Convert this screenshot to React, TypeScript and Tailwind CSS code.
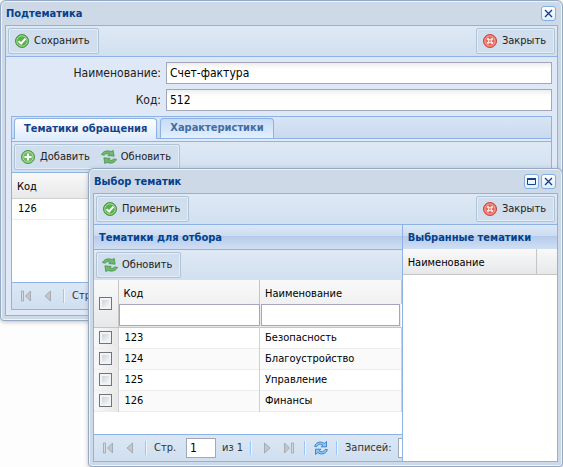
import type { ReactNode } from "react";

const FONT = "font-['DejaVu_Sans_Condensed','DejaVu_Sans',sans-serif] [font-stretch:condensed]";

function CheckIcon() {
  return (
    <svg width="16" height="16" viewBox="0 0 16 16" aria-hidden="true">
      <circle cx="8" cy="8" r="6.5" fill="#58b04a" stroke="#4a9444" />
      <circle cx="8" cy="8" r="5.2" fill="none" stroke="#a9d8a0" />
      <path d="M4.6 8.2 7.1 10.5 11.5 5.6" fill="none" stroke="#fff" strokeWidth="2.1" />
    </svg>
  );
}

function AddIcon() {
  return (
    <svg width="16" height="16" viewBox="0 0 16 16" aria-hidden="true">
      <circle cx="8" cy="8" r="6.5" fill="#6cbb5f" stroke="#4a9444" />
      <circle cx="8" cy="8" r="5.2" fill="none" stroke="#b0dca8" />
      <path d="M8 4.5v7M4.5 8h7" stroke="#fff" strokeWidth="2" />
    </svg>
  );
}

function CancelIcon() {
  return (
    <svg width="16" height="16" viewBox="0 0 16 16" aria-hidden="true">
      <circle cx="8" cy="8" r="6.5" fill="#e56457" stroke="#c9473d" />
      <circle cx="8" cy="8" r="5.1" fill="none" stroke="#f3a79e" />
      <path d="M5.2 5.2l5.6 5.6M10.8 5.2l-5.6 5.6" stroke="#fde3df" strokeWidth="2.2" />
      <circle cx="8" cy="8" r="1" fill="#ea7d72" />
    </svg>
  );
}

function RefreshIcon() {
  return (
    <svg width="16" height="16" viewBox="0 0 16 16" aria-hidden="true">
      <g fill="#6dba6c" stroke="#3d8a48" strokeWidth=".7" strokeLinejoin="round">
        <path d="M.5 5.6C2 2.2 6 .9 10 2.6l2.2-1.2.9 5.8-6.3-.6 1.7-1.3C6.2 4.4 4.3 4.6 3.2 6.2Z" />
        <path d="M15.5 10.4c-1.5 3.4-5.5 4.7-9.5 3l-2.2 1.2-.9-5.8 6.3.6-1.7 1.3c2.3.9 4.2.7 5.3-.9Z" />
      </g>
    </svg>
  );
}

function ReloadIcon() {
  return (
    <svg width="16" height="16" viewBox="0 0 16 16" aria-hidden="true">
      <g fill="#8cc9f8" stroke="#2370c4" strokeWidth=".8" strokeLinejoin="round">
        <path d="M1.6 6.4C2.6 2.8 6.4 1 10 2.7l1.2.8 2.3-2v5.3H8.1l1.6-1.7C7.4 3.6 5 4.2 3.8 6.6Z" />
        <path d="M14.4 9.6c-1 3.6-4.8 5.4-8.4 3.7l-1.2-.8-2.3 2V9.2h5.4l-1.6 1.7c2.3 1.5 4.7.9 5.9-1.5Z" />
      </g>
    </svg>
  );
}

function ArrowIcon({ flip = false, bar = false }: { flip?: boolean; bar?: boolean }) {
  return (
    <svg width="16" height="16" viewBox="0 0 16 16" aria-hidden="true" className={flip ? "-scale-x-100" : ""}>
      {bar && <path d="M3.5 3v10h2V3Z" fill="#d7dade" stroke="#9ca1a7" strokeWidth=".8" />}
      <path
        d={bar ? "M12.5 3v10L7.5 8Z" : "M10.5 3v10L5 8Z"}
        fill="#c3c7cc"
        stroke="#9ca1a7"
        strokeWidth=".8"
      />
    </svg>
  );
}

function ToolButton({ label, icon }: { label: string; icon: ReactNode }) {
  return (
    <button type="button" className="flex h-5 items-center gap-1 pr-[7px] pl-1 text-[11px] text-[#222]">
      {icon}
      {label}
    </button>
  );
}

function ButtonGroup({ children }: { children: ReactNode }) {
  return (
    <div className="flex h-[26px] items-center rounded-xs border border-[#afc3d6] bg-[#d0deee] px-px shadow-[inset_0_0_0_1px_#e3edf7]">
      {children}
    </div>
  );
}

function Toolbar({ children }: { children: ReactNode }) {
  return (
    <div className="flex h-[30px] items-center justify-between bg-linear-to-b from-[#dfe9f5] to-[#d1e0ef] px-0.5">
      {children}
    </div>
  );
}

function TitleTool({ label, children }: { label: string; children: ReactNode }) {
  return (
    <button
      type="button"
      aria-label={label}
      className="grid size-[15px] place-items-center rounded-[3px] border border-[#84aee3] bg-linear-to-b from-white to-[#dcefff]"
    >
      {children}
    </button>
  );
}

function Window({ title, maximizable = false, children }: { title: string; maximizable?: boolean; children: ReactNode }) {
  return (
    <section className="rounded-md rounded-b-sm border border-[#95a9c4] bg-[#cdd9e7] px-1 pb-1 shadow-[inset_0_0_0_1px_#edf3fa,0_1px_4px_#8888]">
      <header className="flex h-6 items-center justify-between pr-0.5 pl-px">
        <h2 className="pt-0.5 text-[11px] font-bold text-[#04408c]">{title}</h2>
        <div className="flex gap-0.5">
          {maximizable && (
            <TitleTool label="Развернуть">
              <svg width="9" height="7" viewBox="0 0 9 7" aria-hidden="true">
                <path d="M.5 1v5.5h8V1" fill="none" stroke="#15428b" />
                <path d="M0 1h9" stroke="#15428b" strokeWidth="2" />
              </svg>
            </TitleTool>
          )}
          <TitleTool label="Закрыть окно">
            <svg width="9" height="9" viewBox="0 0 9 9" aria-hidden="true">
              <path d="M1 1l7 7M8 1l-7 7" stroke="#173a91" strokeWidth="1.3" />
            </svg>
          </TitleTool>
        </div>
      </header>
      <div className="border border-[#8db2e3]">{children}</div>
    </section>
  );
}

function Field({ id, label, value }: { id: string; label: string; value: string }) {
  return (
    <div className="flex items-center gap-[5px]">
      <label htmlFor={id} className="w-[150px] text-right text-[12px] text-[#222]">
        {label}
      </label>
      <input
        id={id}
        defaultValue={value}
        className="h-[22px] min-w-0 flex-1 border border-[#a3a8b8] bg-white bg-linear-to-b from-[#eceeee] to-white to-30% px-[3px] text-[12px] text-black"
      />
    </div>
  );
}

function Separator() {
  return <span className="mx-px h-3.5 w-0.5 shrink-0 border-r border-l border-r-[#eef5fc] border-l-[#98c8ff]" />;
}

function PagerButton({ label, children }: { label: string; children: ReactNode }) {
  return (
    <button type="button" aria-label={label} className="grid size-4 shrink-0 place-items-center">
      {children}
    </button>
  );
}

function Pager({ id, sizable = false }: { id: string; sizable?: boolean }) {
  return (
    <div className="flex h-[27px] items-center gap-1.5 overflow-hidden border-t border-[#8db2e3] bg-linear-to-b from-[#dbe7f4] to-[#cfdff0] pl-1.5 text-[11px] whitespace-nowrap text-[#333]">
      <PagerButton label="Первая страница"><ArrowIcon bar /></PagerButton>
      <PagerButton label="Предыдущая страница"><ArrowIcon /></PagerButton>
      <Separator />
      <label htmlFor={id + "-page"} className="w-[26px] shrink-0">Стр.</label>
      <input id={id + "-page"} defaultValue="1" className="h-5 w-[30px] shrink-0 border border-[#a3a8b8] bg-white px-[3px] text-[12px] text-black" />
      <span className="w-[21px] shrink-0">из 1</span>
      <Separator />
      <PagerButton label="Следующая страница"><ArrowIcon flip /></PagerButton>
      <PagerButton label="Последняя страница"><ArrowIcon flip bar /></PagerButton>
      <Separator />
      <PagerButton label="Обновить список"><ReloadIcon /></PagerButton>
      {sizable && (
        <>
          <Separator />
          <label htmlFor={id + "-size"} className="shrink-0">Записей:</label>
          <input id={id + "-size"} className="h-5 w-[60px] shrink-0 border border-[#a3a8b8] bg-white" />
        </>
      )}
    </div>
  );
}

function PanelTitle({ children }: { children: ReactNode }) {
  return (
    <h3 className="h-6 truncate bg-[linear-gradient(#dce8f7,#ccdcf1_45%,#afc9ea_46%,#b8cdec_52%,#cfdef3)] px-[5px] pt-px text-[11px] leading-6 font-bold text-[#04408c]">
      {children}
    </h3>
  );
}

function Tick({ label }: { label: string }) {
  return (
    <input
      type="checkbox"
      aria-label={label}
      className="mx-auto block size-[13px] appearance-none border border-[#70757b] bg-linear-to-br from-[#c5cad0] to-white shadow-[inset_0_0_0_2px_#f2f3f4]"
    />
  );
}

const topics = [
  ["123", "Безопасность"],
  ["124", "Благоустройство"],
  ["125", "Управление"],
  ["126", "Финансы"],
];

const HEAD = "bg-linear-to-b from-[#f9f9f9] to-[#e7e8ea]";

function TopicPicker() {
  return (
    <Window title="Выбор тематик" maximizable>
      <Toolbar>
        <ButtonGroup><ToolButton label="Применить" icon={<CheckIcon />} /></ButtonGroup>
        <ButtonGroup><ToolButton label="Закрыть" icon={<CancelIcon />} /></ButtonGroup>
      </Toolbar>
      <div className="grid grid-cols-[minmax(0,2fr)_minmax(0,1fr)] border-t border-[#8db2e3] bg-white">
        <div className="border-r border-[#8db2e3]">
          <PanelTitle>Тематики для отбора</PanelTitle>
          <div className="border-t border-[#8db2e3]">
            <Toolbar>
              <ButtonGroup><ToolButton label="Обновить" icon={<RefreshIcon />} /></ButtonGroup>
            </Toolbar>
          </div>
          <div className="min-h-[154px]">
            <table className="w-full table-fixed border-collapse text-left text-[11px] text-black">
              <colgroup>
                <col className="w-6" />
                <col />
                <col />
              </colgroup>
              <thead className={HEAD}>
                <tr className="h-6">
                  <th rowSpan={2} className="border-r border-b border-[#c5c5c5] p-0"><Tick label="Выбрать все" /></th>
                  <th className="border-r border-[#c5c5c5] px-[5px] pt-1 pb-0 font-normal">Код</th>
                  <th className="border-r border-[#c5c5c5] px-[5px] pt-1 pb-0 font-normal">Наименование</th>
                </tr>
                <tr className="h-[23px] border-b border-[#c5c5c5]">
                  <th className="p-0"><input aria-label="Фильтр по коду" className="block h-[22px] w-full border border-[#a5a5bd] bg-white px-1 font-normal" /></th>
                  <th className="py-0 pr-px pl-px"><input aria-label="Фильтр по наименованию" className="block h-[22px] w-full border border-[#a5a5bd] bg-white px-1 font-normal" /></th>
                </tr>
              </thead>
              <tbody>
                {topics.map(([code, name]) => (
                  <tr key={code} className="h-[21px] border-b border-[#ededed] even:bg-[#fafafa]">
                    <td className="border-r border-[#d0d0d0] bg-linear-to-r from-[#f8f8f8] to-[#e8e8e9] p-0"><Tick label={name} /></td>
                    <td className="border-r border-[#d0d0d0] px-1.5 pt-0.5 pb-0">{code}</td>
                    <td className="border-r border-[#d0d0d0] px-[5px] pt-0.5 pb-0">{name}</td>
                  </tr>
                ))}
              </tbody>
            </table>
          </div>
          <Pager id="picker" sizable />
        </div>
        <div>
          <PanelTitle>Выбранные тематики</PanelTitle>
          <table className="w-full table-fixed border-collapse text-left text-[11px] text-black">
            <thead className={HEAD}>
              <tr className="h-[25px] border-b border-[#c5c5c5]">
                <th className="border-r border-[#c5c5c5] px-[5px] pt-1 pb-0 font-normal">Наименование</th>
                <td className="w-5 p-0" />
              </tr>
            </thead>
          </table>
        </div>
      </div>
    </Window>
  );
}

export default function App() {
  return (
    <main className={`relative min-h-screen bg-[#fdfdfd] ${FONT}`}>
      <Window title="Подтематика">
        <Toolbar>
          <ButtonGroup><ToolButton label="Сохранить" icon={<CheckIcon />} /></ButtonGroup>
          <ButtonGroup><ToolButton label="Закрыть" icon={<CancelIcon />} /></ButtonGroup>
        </Toolbar>
        <div className="border-t border-[#8db2e3] bg-[#dfe8f6] p-[5px]">
          <div className="flex flex-col gap-[5px]">
            <Field id="name" label="Наименование:" value="Счет-фактура" />
            <Field id="code" label="Код:" value="512" />
          </div>
          <div className="mt-[5px] border border-[#8db2e3]">
            <div role="tablist" className="flex h-[22px] items-end gap-[3px] border-b border-[#8db2e3] bg-linear-to-b from-[#d9e5f5] to-[#c9d9ee] px-0.5 text-[11px] font-bold">
              <button type="button" role="tab" aria-selected="true" className="-mb-px h-[21px] rounded-t border border-b-0 border-[#8db2e3] bg-linear-to-b from-white to-[#deecfd] px-[9px] text-[#15428b]">
                Тематики обращения
              </button>
              <button type="button" role="tab" aria-selected="false" className="h-5 rounded-t border border-b-0 border-[#8db2e3] bg-linear-to-b from-[#c8dcf5] to-[#e2effe] px-[9px] text-[#416da3]">
                Характеристики
              </button>
            </div>
            <div className="border-t-2 border-[#deecfd]">
              <div className="border-y border-[#8db2e3]">
                <Toolbar>
                  <ButtonGroup>
                    <ToolButton label="Добавить" icon={<AddIcon />} />
                    <ToolButton label="Обновить" icon={<RefreshIcon />} />
                  </ButtonGroup>
                </Toolbar>
              </div>
              <div className="min-h-[109px] bg-white">
                <table className="w-full border-collapse text-left text-[11px] text-black">
                  <thead className={HEAD}>
                    <tr className="h-[25px] border-b border-[#d0d0d0]">
                      <th className="px-[5px] pt-1 pb-0 font-normal">Код</th>
                    </tr>
                  </thead>
                  <tbody>
                    <tr className="h-[21px] border-b border-[#ededed]">
                      <td className="px-1.5 pt-0.5 pb-0">126</td>
                    </tr>
                  </tbody>
                </table>
              </div>
              <Pager id="subject" />
            </div>
          </div>
        </div>
      </Window>
      <div className="absolute top-[168px] right-0 left-[88px]">
        <TopicPicker />
      </div>
    </main>
  );
}
